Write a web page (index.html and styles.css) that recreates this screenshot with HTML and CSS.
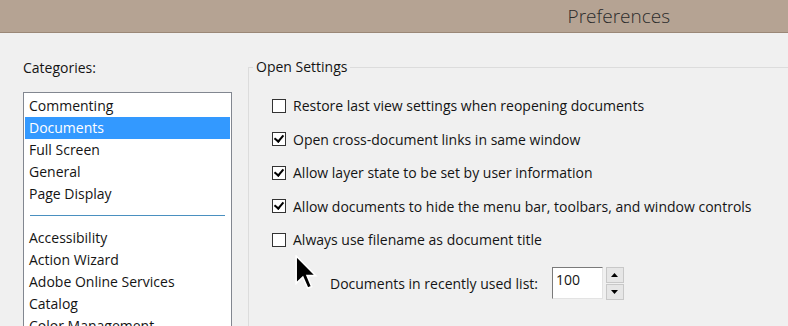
FILE: index.html
```html
<!DOCTYPE html>
<html>
    <head>
        <title>Preferences</title>
        <link rel="stylesheet" href="styles.css">
    </head>
    <body>
        <div class="titlebar">
            <span class="title">Preferences</span>
        </div>
        <div class="content">
            <div class="categories">
                <label class="cat-label">Categories:</label>
                <div class="listbox">
                    <div class="item">Commenting</div>
                    <div class="item selected">Documents</div>
                    <div class="item">Full Screen</div>
                    <div class="item">General</div>
                    <div class="item">Page Display</div>
                    <div class="sep"></div>
                    <div class="item">Accessibility</div>
                    <div class="item">Action Wizard</div>
                    <div class="item">Adobe Online Services</div>
                    <div class="item">Catalog</div>
                    <div class="item">Color Management</div>
                </div>
            </div>
            <fieldset class="group">
                <legend>Open Settings</legend>
                <div class="opt"><span class="box"></span>Restore last view settings when reopening documents</div>
                <div class="opt"><span class="box checked"></span>Open cross-document links in same window</div>
                <div class="opt"><span class="box checked"></span>Allow layer state to be set by user information</div>
                <div class="opt"><span class="box checked"></span>Allow documents to hide the menu bar, toolbars, and window controls</div>
                <div class="opt"><span class="box"></span>Always use filename as document title</div>
                <div class="recent">
                    <span>Documents in recently used list:</span>
                    <span class="num">100</span>
                    <span class="spin">
                        <span class="btn"><svg width="7" height="4" viewBox="0 0 7 4"><path d="M0 4 L3.5 0 L7 4Z" fill="#000"/></svg></span>
                        <span class="btn"><svg width="7" height="4" viewBox="0 0 7 4"><path d="M0 0 L3.5 4 L7 0Z" fill="#000"/></svg></span>
                    </span>
                </div>
                <svg class="cursor" width="23" height="35" viewBox="0 0 13 20">
                    <path d="M0.6 0.6 L0.6 16.2 L4.4 12.6 L7.2 19 L9.4 18 L6.8 11.8 L11.8 11.8 Z" fill="#000" stroke="#fff" stroke-width="0.9" stroke-linejoin="miter"/>
                </svg>
            </fieldset>
        </div>
    </body>
</html>
```

FILE: styles.css
```css
body{
    margin: 0;
    background-color: #f0f0f0;
    font-family: 'Open Sans', 'Noto Sans', sans-serif;
    font-size: 14px;
    color: #141414;
    overflow: hidden;
    height: 326px;
}

.titlebar{
    height: 32px;
    background-color: #b5a393;
    border-bottom: 1px solid #9a8777;
    display: flex;
    align-items: center;
    justify-content: flex-end;
    padding-right: 118px;
}

.title{
    font-size: 19px;
    font-weight: 300;
    color: #2b2b2b;
}

.content{
    display: flex;
    padding-left: 23px;
}

.categories{
    width: 209px;
    display: flex;
    flex-direction: column;
}

.cat-label{
    margin-top: 25px;
    height: 20px;
    line-height: 20px;
}

.listbox{
    margin-top: 14px;
    border: 1px solid #828790;
    border-bottom: none;
    background-color: #fff;
    padding: 2px 1px 0 1px;
    height: 240px;
}

.item{
    height: 22px;
    line-height: 22px;
    padding-left: 4px;
    white-space: nowrap;
}

.selected{
    background-color: #3399ff;
    color: #fff;
}

.sep{
    height: 1px;
    background-color: #4a90c0;
    margin: 10px 5px 11px 5px;
}

.group{
    position: relative;
    margin: 24px 0 0 16px;
    padding: 12px 0 0 23px;
    border: 1px solid #dcdcdc;
    border-right: none;
    border-bottom: none;
    flex: 1;
    min-width: 0;
}

.group legend{
    padding: 0 3px 0 3px;
    margin-left: -19px;
    line-height: 20px;
}

.opt{
    display: flex;
    align-items: center;
    height: 33.5px;
    white-space: nowrap;
}

.box{
    width: 12px;
    height: 12px;
    border: 1px solid #333;
    background-color: #fff;
    margin-right: 7px;
    position: relative;
}

.checked::after{
    content: "";
    position: absolute;
    left: 3px;
    top: 0px;
    width: 4px;
    height: 7px;
    border-right: 2px solid #000;
    border-bottom: 2px solid #000;
    transform: rotate(40deg);
}

.recent{
    display: flex;
    align-items: center;
    margin-top: 10px;
    padding-left: 58px;
    white-space: nowrap;
}

.num{
    margin-left: 14px;
    width: 46px;
    height: 30px;
    border: 1px solid #7a7a7a;
    border-right-color: #e3e3e3;
    border-bottom-color: #e3e3e3;
    background-color: #fff;
    padding-left: 3px;
    line-height: 24px;
}

.spin{
    display: flex;
    flex-direction: column;
    gap: 1px;
    margin-left: 3px;
}

.btn{
    width: 16px;
    height: 14px;
    border: 1px solid #c8c8c8;
    background-color: #e6e6e6;
    display: flex;
    align-items: center;
    justify-content: center;
}

.cursor{
    position: absolute;
    left: 46px;
    top: 178px;
}
```
